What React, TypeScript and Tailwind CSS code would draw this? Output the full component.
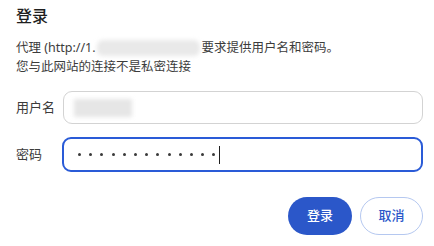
export default function App() {
  const dots = Array.from({ length: 13 });
  return (
    <div
      className="w-[434px] h-[246px] bg-white pl-4 pr-[11px] pt-[3px] text-[#1f1f1f]"
      style={{ fontFamily: '"Noto Sans", "Noto Sans CJK SC", sans-serif' }}
    >
      <h1 className="text-[16px] leading-[26px] font-medium">登录</h1>
      <div className="mt-[9px] text-[12.5px] leading-[19px] text-[#3c3c3c]">
        <p className="flex items-center">
          <span>代理 (http://1.</span>
          <span className="ml-[1px] mr-[2px] inline-block h-[16px] w-[103px] rounded-md bg-[#e9e9e9] blur-[2px]" />
          <span>要求提供用户名和密码。</span>
        </p>
        <p>您与此网站的连接不是私密连接</p>
      </div>
      <div className="mt-[15px] flex flex-col gap-[13px] text-[13px]">
        <div className="flex items-center">
          <label className="w-[47px] text-[#3c3c3c]">用户名</label>
          <div className="flex h-[33px] flex-1 items-center rounded-[9px] border border-[#d3d3d3] pl-[10px]">
            <span className="inline-block h-[18px] w-[58px] bg-[#e6e6e6] blur-[2px]" />
          </div>
        </div>
        <div className="flex items-center">
          <label className="w-[46px] text-[#3c3c3c]">密码</label>
          <div className="flex h-[35px] flex-1 items-center rounded-[9px] border-2 border-[#2a5bd7] pl-[14px]">
            <div className="flex items-center gap-[8.2px]">
              {dots.map((_, i) => (
                <span key={i} className="h-[3px] w-[3px] rounded-full bg-[#3a3a3a]" />
              ))}
            </div>
            <span className="ml-[4px] h-[18px] w-px bg-[#1f1f1f]" />
          </div>
        </div>
      </div>
      <div className="mt-[25px] flex justify-end gap-2">
        <button className="h-[38px] w-[64px] rounded-full bg-[#2b57c9] text-[13px] font-medium text-white">
          登录
        </button>
        <button className="h-[38px] w-[63px] rounded-full border border-[#b5c8f0] bg-white text-[13px] font-medium text-[#2b57c9]">
          取消
        </button>
      </div>
    </div>
  );
}
